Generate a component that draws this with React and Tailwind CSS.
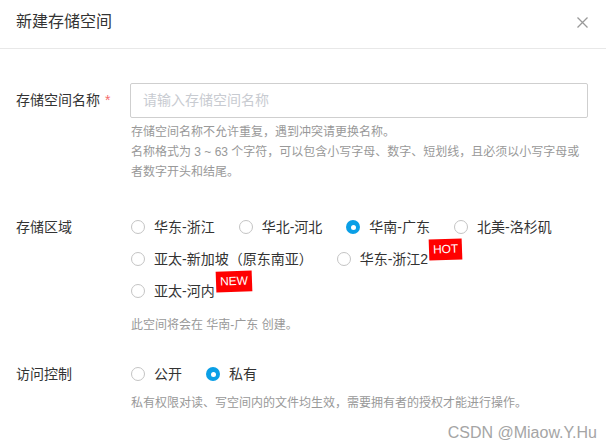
import React from 'react';

const Radio = ({ label, checked, badge }) => (
  <div className="flex items-center h-8">
    {checked ? (
      <span className="w-[14px] h-[14px] rounded-full bg-[#0a9fe6] flex items-center justify-center">
        <span className="w-[5px] h-[5px] rounded-full bg-white" />
      </span>
    ) : (
      <span className="w-[14px] h-[14px] rounded-full border border-[#c4c4c4] bg-white" />
    )}
    <span className="ml-[9px] text-[14px] text-[#333]">{label}</span>
    {badge && (
      <span className="relative -top-[10px] ml-px h-[21px] px-1 bg-[#f00] text-white text-[12px] leading-[21px] rotate-[-2deg]">
        {badge}
      </span>
    )}
  </div>
);

const App = () => {
  const regions = [
    { label: '华东-浙江' },
    { label: '华北-河北' },
    { label: '华南-广东', checked: true },
    { label: '北美-洛杉矶' },
    { label: '亚太-新加坡（原东南亚）' },
    { label: '华东-浙江2', badge: 'HOT' },
    { label: '亚太-河内', badge: 'NEW' },
  ];

  return (
    <div
      className="relative w-full h-[448px] bg-white overflow-hidden"
      style={{ fontFamily: '"Liberation Sans", "Noto Sans CJK SC", sans-serif' }}
    >
      {/* Header */}
      <div className="h-[49px] border-b border-[#e8e8e8] flex items-center justify-between px-4 pb-[4px]">
        <h1 className="text-[16px] text-[#333]">新建存储空间</h1>
        <svg width="11" height="11" viewBox="0 0 11 11" className="mr-[2px]">
          <path d="M0.5 0.5 L10.5 10.5 M10.5 0.5 L0.5 10.5" stroke="#999" strokeWidth="1.3" />
        </svg>
      </div>

      {/* 存储空间名称 */}
      <div className="flex items-center mt-[34px]">
        <div className="w-[130px] shrink-0 pl-4 text-[14px] text-[#333]">
          存储空间名称 <span className="text-[#f56c6c] ml-px">*</span>
        </div>
        <div className="w-[458px] h-[35px] border border-[#cfcfcf] rounded-[2px] flex items-center px-3 text-[14px] text-[#c8cbd1]">
          请输入存储空间名称
        </div>
      </div>
      <div className="ml-[131px] mt-1 text-[12px] leading-5 text-[#999]">
        <div>存储空间名称不允许重复，遇到冲突请更换名称。</div>
        <div>名称格式为 3 ~ 63 个字符，可以包含小写字母、数字、短划线，且必须以小写字母或</div>
        <div>者数字开头和结尾。</div>
      </div>

      {/* 存储区域 */}
      <div className="flex mt-[29px]">
        <div className="w-[131px] shrink-0 pl-4 h-8 leading-8 text-[14px] text-[#333]">存储区域</div>
        <div className="w-[457px] flex flex-wrap gap-x-6">
          {regions.map((r) => (
            <Radio key={r.label} {...r} />
          ))}
        </div>
      </div>
      <div className="ml-[131px] mt-2 text-[12px] leading-5 text-[#999]">此空间将会在 华南-广东 创建。</div>

      {/* 访问控制 */}
      <div className="flex mt-[23px]">
        <div className="w-[131px] shrink-0 pl-4 h-8 leading-8 text-[14px] text-[#333]">访问控制</div>
        <div className="flex gap-x-6">
          <Radio label="公开" />
          <Radio label="私有" checked />
        </div>
      </div>
      <div className="ml-[131px] mt-[3px] text-[12px] leading-5 text-[#999]">
        私有权限对读、写空间内的文件均生效，需要拥有者的授权才能进行操作。
      </div>

      {/* watermark */}
      <div className="absolute right-[9px] bottom-[6px] text-[16px] leading-[18px] text-[#a5a5a5]">CSDN @Miaow.Y.Hu</div>
    </div>
  );
};

export default App;
